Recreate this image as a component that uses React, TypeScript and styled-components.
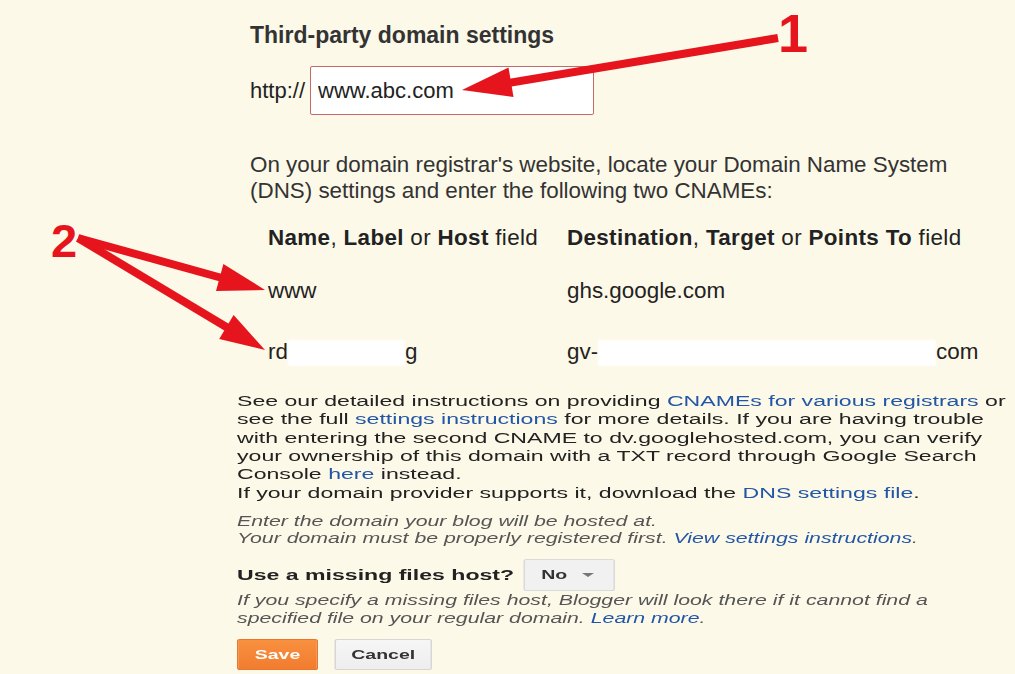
import React from "react";
import styled, { createGlobalStyle } from "styled-components";

const Global = createGlobalStyle`
  html, body { margin: 0; padding: 0; background: #fdf9e8; }
  body { font-family: "Liberation Sans", Arial, sans-serif; color: #222; overflow: hidden; }
`;

const Page = styled.div`
  position: relative;
  width: 1015px;
  height: 674px;
  padding-top: 21px;
  box-sizing: border-box;
  display: flex;
  flex-direction: column;
`;

const Top = styled.section`
  margin-left: 250px;
  display: flex;
  flex-direction: column;
`;

const Title = styled.h2`
  margin: 0;
  font-size: 23px;
  line-height: 28px;
  font-weight: bold;
  color: #333;
`;

const HttpRow = styled.div`
  margin-top: 17px;
  display: flex;
  align-items: center;
  gap: 5px;
  font-size: 22px;
  color: #222;
`;

const DomainInput = styled.input`
  box-sizing: border-box;
  width: 284px;
  height: 49px;
  padding: 0 0 0 7px;
  border: 1px solid #c46a66;
  border-radius: 2px;
  background: #fff;
  font-family: "Liberation Sans", Arial, sans-serif;
  font-size: 22px;
  color: #222;
  outline: none;
`;

const Intro = styled.p`
  margin: 37px 0 0;
  font-size: 22.4px;
  line-height: 26px;
  color: #333;
`;

const Table = styled.div`
  margin: 21px 0 0 18px;
  display: flex;
  flex-direction: column;
`;

const Row = styled.div<{ $gap: number; $head?: boolean }>`
  margin-top: ${(p) => p.$gap}px;
  display: grid;
  grid-template-columns: 299px 1fr;
  font-size: 22.4px;
  line-height: 26px;
  letter-spacing: ${(p) => (p.$head ? "0.35px" : "0")};
  color: #222;
  white-space: nowrap;
`;

const Redact = styled.span<{ $w: number }>`
  display: inline-block;
  width: ${(p) => p.$w}px;
  height: 26px;
  vertical-align: middle;
  background: #fff;
  filter: blur(0.8px);
`;

const Lower = styled.section`
  margin: 26px 0 0 237px;
  width: 520px;
  transform: scaleX(1.5);
  transform-origin: 0 0;
  display: flex;
  flex-direction: column;
  white-space: nowrap;
`;

const Para = styled.p`
  margin: 0;
  font-size: 15.4px;
  line-height: 18.3px;
  color: #222;
`;

const Link = styled.a`
  color: #2256a6;
  text-decoration: none;
`;

const Hint = styled.p<{ $top: number; $lh: number }>`
  margin: ${(p) => p.$top}px 0 0;
  font-size: 14.2px;
  line-height: ${(p) => p.$lh}px;
  font-style: italic;
  color: #555;
`;

const UseRow = styled.div`
  margin-top: 12px;
  display: flex;
  align-items: center;
  gap: 6px;
  height: 32px;
`;

const UseLabel = styled.span`
  font-size: 15.4px;
  font-weight: bold;
  color: #222;
`;

const Select = styled.div`
  box-sizing: border-box;
  width: 61px;
  height: 32px;
  padding: 0 0 0 11px;
  display: flex;
  align-items: center;
  gap: 10px;
  background: #f1f1f1;
  border: 1px solid #dadada;
  border-radius: 2px;
  font-size: 13px;
  font-weight: bold;
  color: #333;
`;

const Caret = styled.span`
  width: 0;
  height: 0;
  border-left: 4px solid transparent;
  border-right: 4px solid transparent;
  border-top: 4px solid #777;
`;

const Buttons = styled.div`
  margin-top: 12px;
  display: flex;
  gap: 11px;
`;

const Button = styled.button<{ $primary?: boolean; $w: number }>`
  box-sizing: border-box;
  width: ${(p) => p.$w}px;
  height: 31px;
  padding: 0;
  border-radius: 2px;
  font-family: "Liberation Sans", Arial, sans-serif;
  font-size: 13px;
  font-weight: bold;
  border: 1px solid ${(p) => (p.$primary ? "#e8772c" : "#d6d6d6")};
  background: ${(p) =>
    p.$primary ? "linear-gradient(#f8913f, #f27c2f)" : "linear-gradient(#f6f6f6, #eeeeee)"};
  color: ${(p) => (p.$primary ? "#fff" : "#333")};
`;

const Overlay = styled.svg`
  position: absolute;
  left: 0;
  top: 0;
  width: 1015px;
  height: 674px;
  pointer-events: none;
`;

const Num = styled.text`
  font-family: "Liberation Sans", Arial, sans-serif;
  font-weight: bold;
  fill: #e5141d;
`;

const RED = "#e5141d";

export default function App() {
  return (
    <>
      <Global />
      <Page>
        <Top>
          <Title>Third-party domain settings</Title>
          <HttpRow>
            <span>http://</span>
            <DomainInput readOnly defaultValue="www.abc.com" />
          </HttpRow>
          <Intro>
            On your domain registrar's website, locate your Domain Name System
            <br />
            (DNS) settings and enter the following two CNAMEs:
          </Intro>
          <Table>
            <Row $gap={0} $head>
              <span>
                <b>Name</b>, <b>Label</b> or <b>Host</b> field
              </span>
              <span>
                <b>Destination</b>, <b>Target</b> or <b>Points To</b> field
              </span>
            </Row>
            <Row $gap={27}>
              <span>www</span>
              <span>ghs.google.com</span>
            </Row>
            <Row $gap={35}>
              <span>
                rd<Redact $w={117} />g
              </span>
              <span>
                gv-<Redact $w={338} />com
              </span>
            </Row>
          </Table>
        </Top>
        <Lower>
          <Para>
            See our detailed instructions on providing <Link>CNAMEs for various registrars</Link> or
            <br />
            see the full <Link>settings instructions</Link> for more details. If you are having trouble
            <br />
            with entering the second CNAME to dv.googlehosted.com, you can verify
            <br />
            your ownership of this domain with a TXT record through Google Search
            <br />
            Console <Link>here</Link> instead.
            <br />
            If your domain provider supports it, download the <Link>DNS settings file</Link>.
          </Para>
          <Hint $top={11} $lh={17}>
            Enter the domain your blog will be hosted at.
            <br />
            Your domain must be properly registered first. <Link>View settings instructions</Link>.
          </Hint>
          <UseRow>
            <UseLabel>Use a missing files host?</UseLabel>
            <Select>
              No <Caret />
            </Select>
          </UseRow>
          <Hint $top={0} $lh={18}>
            If you specify a missing files host, Blogger will look there if it cannot find a
            <br />
            specified file on your regular domain. <Link>Learn more</Link>.
          </Hint>
          <Buttons>
            <Button $primary $w={54}>Save</Button>
            <Button $w={65}>Cancel</Button>
          </Buttons>
        </Lower>
        <Overlay viewBox="0 0 1015 674">
          <line x1={778} y1={38} x2={508} y2={83} stroke={RED} strokeWidth={8} />
          <polygon points="462,90 508.5,67.5 513.5,97" fill={RED} />
          <line x1={78} y1={238} x2={222} y2={278} stroke={RED} strokeWidth={8} />
          <polygon points="265,290 223.4,263.9 216,291" fill={RED} />
          <line x1={78} y1={238} x2={228} y2={328} stroke={RED} strokeWidth={8} />
          <polygon points="265,350 233.6,314.9 219.2,339" fill={RED} />
          <Num x={778} y={52} fontSize={54}>1</Num>
          <Num x={51} y={257} fontSize={47}>2</Num>
        </Overlay>
      </Page>
    </>
  );
}
